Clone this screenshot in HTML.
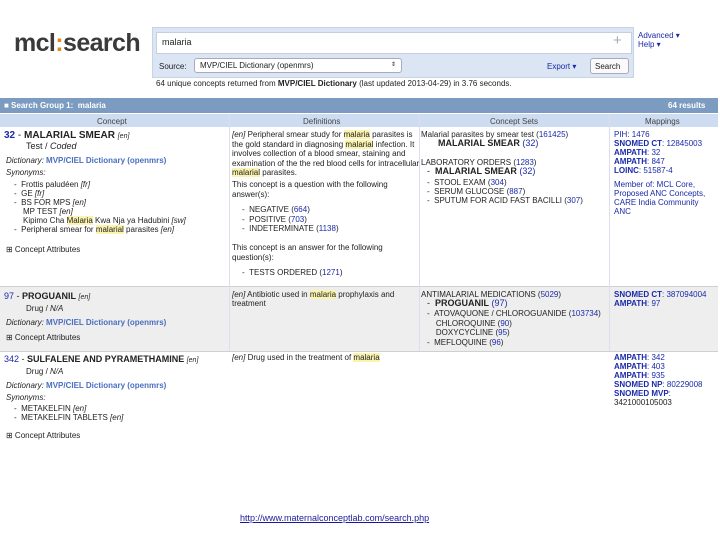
<!DOCTYPE html>
<html><head><meta charset="utf-8"><style>
body{margin:0;width:720px;height:540px;background:#fff;position:relative;overflow:hidden;font-family:"Liberation Sans",Arial,sans-serif;color:#222}
.t{position:absolute;white-space:nowrap;font-size:8px;line-height:9px}
.b{font-weight:bold}.i{font-style:italic}.bl{color:#1a2aa8}.lb{color:#4a6ec0;font-weight:bold}
.h{background:#fbf3b0}
.box{position:absolute}
</style></head><body>
<div class="t" style="left:14px;top:29px;font-size:25px;line-height:28px;color:#3a3a3a;font-weight:bold;letter-spacing:-0.6px">mcl<span style="color:#e08a1e">:</span>search</div>
<div class="box" style="left:152px;top:27px;width:480px;height:49px;background:#dbe5f3;border:1px solid #c8d4e6"></div>
<div class="box" style="left:156px;top:32px;width:474px;height:20px;background:#fff;border:1px solid #c5cfdd"></div>
<div class="t" style="left:162px;top:38px;font-size:9px">malaria</div>
<div class="t" style="left:613px;top:33px;font-size:15px;line-height:16px;color:#aab">+</div>
<div class="t" style="left:159px;top:62px">Source:</div>
<div class="box" style="left:194px;top:58px;width:206px;height:13px;background:#fff;border:1px solid #aab;border-radius:3px"></div>
<div class="t" style="left:200px;top:61px">MVP/CIEL Dictionary (openmrs)</div>
<div class="t" style="left:391px;top:61px;font-size:6px">&#8661;</div>
<div class="t bl" style="left:547px;top:62px">Export &#9662;</div>
<div class="box" style="left:590px;top:58px;width:37px;height:14px;background:#fafafa;border:1px solid #aab;border-radius:3px"></div>
<div class="t" style="left:595px;top:62px">Search</div>
<div class="t bl" style="left:638px;top:31px">Advanced &#9662;</div>
<div class="t bl" style="left:638px;top:40px">Help &#9662;</div>
<div class="t" style="left:156px;top:79px">64 unique concepts returned from <b>MVP/CIEL Dictionary</b> (last updated 2013-04-29) in 3.76 seconds.</div>

<div class="box" style="left:0;top:98px;width:718px;height:15px;background:#7b9bc0"></div>
<div class="t b" style="left:4px;top:101px;color:#fff">&#9632; Search Group 1: &nbsp;<span style="font-weight:bold">malaria</span></div>
<div class="t b" style="left:668px;top:101px;color:#fff">64 results</div>
<div class="box" style="left:0;top:114px;width:718px;height:13px;background:#cddcf0"></div>

<div class="box" style="left:0;top:286px;width:718px;height:64px;background:#eeeeee;border-top:1px solid #d0d0d0;border-bottom:1px solid #d0d0d0"></div>
<div class="box" style="left:229px;top:114px;width:1px;height:237px;background:#dde"></div>
<div class="box" style="left:419px;top:114px;width:1px;height:237px;background:#dde"></div>
<div class="box" style="left:609px;top:114px;width:1px;height:237px;background:#dde"></div>
<div class="t" style="left:97px;top:117px;color:#444">Concept</div>
<div class="t" style="left:303px;top:117px;color:#444">Definitions</div>
<div class="t" style="left:490px;top:117px;color:#444">Concept Sets</div>
<div class="t" style="left:645px;top:117px;color:#444">Mappings</div>

<!-- row 1 -->
<div class="t" style="left:4px;top:130px;font-size:10px;line-height:11px"><span class="bl b">32</span> - <b>MALARIAL SMEAR</b> <span class="i" style="font-size:7px">[en]</span></div>
<div class="t" style="left:26px;top:142px;font-size:9px">Test / <i>Coded</i></div>
<div class="t" style="left:6px;top:156px"><i>Dictionary:</i> <span class="lb">MVP/CIEL Dictionary (openmrs)</span></div>
<div class="t i" style="left:6px;top:168px">Synonyms:</div>
<div class="t" style="left:14px;top:180px">- &nbsp;Frottis paludéen <i>[fr]</i></div>
<div class="t" style="left:14px;top:189px">- &nbsp;GE <i>[fr]</i></div>
<div class="t" style="left:14px;top:198px">- &nbsp;BS FOR MPS <i>[en]</i></div>
<div class="t" style="left:23px;top:207px">MP TEST <i>[en]</i></div>
<div class="t" style="left:23px;top:216px">Kipimo Cha <span class="h">Malaria</span> Kwa Nja ya Hadubini <i>[sw]</i></div>
<div class="t" style="left:14px;top:225px">- &nbsp;Peripheral smear for <span class="h">malarial</span> parasites <i>[en]</i></div>
<div class="t" style="left:6px;top:245px">&#8862; Concept Attributes</div>

<div class="t" style="left:232px;top:130px;line-height:9.5px"><i>[en]</i> Peripheral smear study for <span class="h">malaria</span> parasites is<br>the gold standard in diagnosing <span class="h">malarial</span> infection. It<br>involves collection of a blood smear, staining and<br>examination of the the red blood cells for intracellular<br><span class="h">malarial</span> parasites.</div>
<div class="t" style="left:232px;top:180px;line-height:9.5px">This concept is a question with the following<br>answer(s):</div>
<div class="t" style="left:242px;top:205px;font-size:8px;line-height:9.5px">- &nbsp;NEGATIVE (<span class="bl">664</span>)<br>- &nbsp;POSITIVE (<span class="bl">703</span>)<br>- &nbsp;INDETERMINATE (<span class="bl">1138</span>)</div>
<div class="t" style="left:232px;top:243px;line-height:9.5px">This concept is an answer for the following<br>question(s):</div>
<div class="t" style="left:242px;top:268px">- &nbsp;TESTS ORDERED (<span class="bl">1271</span>)</div>

<div class="t" style="left:421px;top:130px">Malarial parasites by smear test (<span class="bl">161425</span>)</div>
<div class="t b" style="left:438px;top:139px;font-size:9px">MALARIAL SMEAR <span style="font-weight:normal;color:#1a2aa8">(32)</span></div>
<div class="t" style="left:421px;top:158px">LABORATORY ORDERS (<span class="bl">1283</span>)</div>
<div class="t" style="left:427px;top:167px;font-size:9px">- &nbsp;<b>MALARIAL SMEAR</b> <span class="bl">(32)</span></div>
<div class="t" style="left:427px;top:178px">- &nbsp;STOOL EXAM (<span class="bl">304</span>)</div>
<div class="t" style="left:427px;top:187px">- &nbsp;SERUM GLUCOSE (<span class="bl">887</span>)</div>
<div class="t" style="left:427px;top:196px">- &nbsp;SPUTUM FOR ACID FAST BACILLI (<span class="bl">307</span>)</div>

<div class="t bl" style="left:614px;top:130px;line-height:9px">PIH: 1476<br><b>SNOMED CT</b>: 12845003<br><b>AMPATH</b>: 32<br><b>AMPATH</b>: 847<br><b>LOINC</b>: 51587-4</div>
<div class="t bl" style="left:614px;top:180px;line-height:9px">Member of: MCL Core,<br>Proposed ANC Concepts,<br>CARE India Community<br>ANC</div>

<!-- row 2 -->
<div class="t" style="left:4px;top:292px;font-size:9px"><span class="bl">97</span> - <b>PROGUANIL</b> <span class="i" style="font-size:7px">[en]</span></div>
<div class="t" style="left:26px;top:304px">Drug / <i>N/A</i></div>
<div class="t" style="left:6px;top:318px"><i>Dictionary:</i> <span class="lb">MVP/CIEL Dictionary (openmrs)</span></div>
<div class="t" style="left:6px;top:333px">&#8862; Concept Attributes</div>
<div class="t" style="left:232px;top:290px;line-height:9px"><i>[en]</i> Antibiotic used in <span class="h">malaria</span> prophylaxis and<br>treatment</div>
<div class="t" style="left:421px;top:290px">ANTIMALARIAL MEDICATIONS (<span class="bl">5029</span>)</div>
<div class="t" style="left:427px;top:299px;font-size:9px">- &nbsp;<b>PROGUANIL</b> <span class="bl">(97)</span></div>
<div class="t" style="left:427px;top:309px;line-height:9.5px">- &nbsp;ATOVAQUONE / CHLOROGUANIDE (<span class="bl">103734</span>)<br>&nbsp;&nbsp;&nbsp;&nbsp;CHLOROQUINE (<span class="bl">90</span>)<br>&nbsp;&nbsp;&nbsp;&nbsp;DOXYCYCLINE (<span class="bl">95</span>)<br>- &nbsp;MEFLOQUINE (<span class="bl">96</span>)</div>
<div class="t bl" style="left:614px;top:290px;line-height:9px"><b>SNOMED CT</b>: 387094004<br><b>AMPATH</b>: 97</div>

<!-- row 3 -->
<div class="t" style="left:4px;top:355px;font-size:9px"><span class="bl">342</span> - <b>SULFALENE AND PYRAMETHAMINE</b> <span class="i" style="font-size:7px">[en]</span></div>
<div class="t" style="left:26px;top:367px">Drug / <i>N/A</i></div>
<div class="t" style="left:6px;top:381px"><i>Dictionary:</i> <span class="lb">MVP/CIEL Dictionary (openmrs)</span></div>
<div class="t i" style="left:6px;top:393px">Synonyms:</div>
<div class="t" style="left:14px;top:404px;line-height:9px">- &nbsp;METAKELFIN <i>[en]</i><br>- &nbsp;METAKELFIN TABLETS <i>[en]</i></div>
<div class="t" style="left:6px;top:431px">&#8862; Concept Attributes</div>
<div class="t" style="left:232px;top:353px"><i>[en]</i> Drug used in the treatment of <span class="h">malaria</span></div>
<div class="t bl" style="left:614px;top:353px;line-height:9px"><b>AMPATH</b>: 342<br><b>AMPATH</b>: 403<br><b>AMPATH</b>: 935<br><b>SNOMED NP</b>: 80229008<br><b>SNOMED MVP</b>:<br><span style="color:#222">3421000105003</span></div>

<div class="t" style="left:240px;top:513px;font-size:9px;line-height:10px;color:#1a1a99;text-decoration:underline">http://www.maternalconceptlab.com/search.php</div>
</body></html>
